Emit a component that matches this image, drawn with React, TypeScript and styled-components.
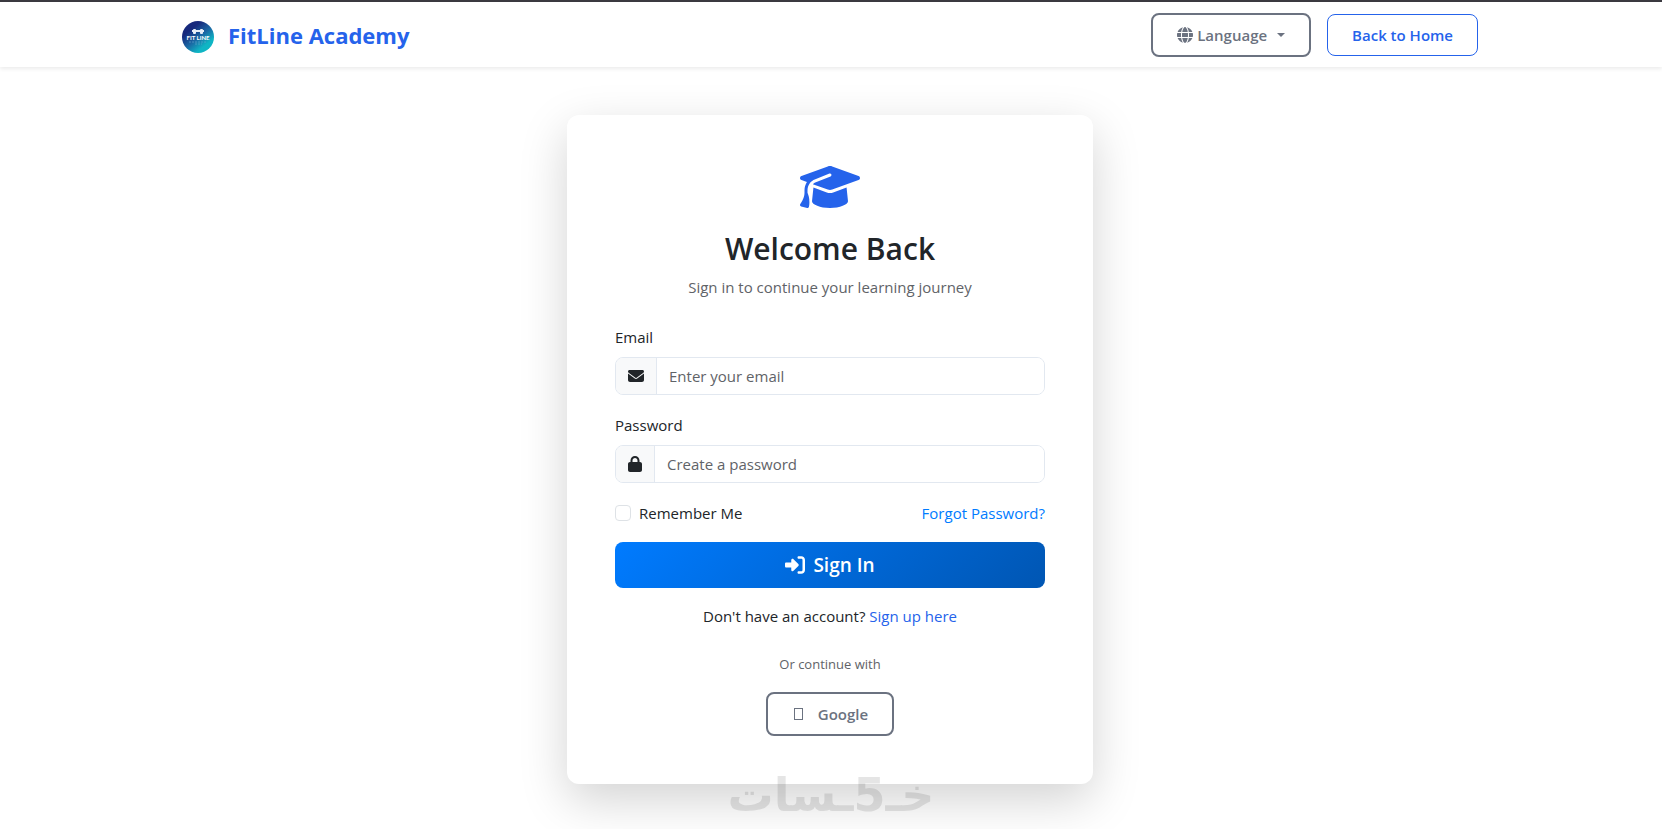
import React from "react";
import styled, { createGlobalStyle } from "styled-components";
import {
  FaEnvelope,
  FaGlobe,
  FaGraduationCap,
  FaLock,
  FaRightToBracket,
} from "react-icons/fa6";

const GlobalStyle = createGlobalStyle`
  *, *::before, *::after { box-sizing: border-box; }
  body {
    margin: 0;
    background: #fff;
    color: #212529;
    font-family: "Segoe UI", "Open Sans", "Noto Sans", sans-serif;
    font-size: 15px;
    line-height: 24px;
  }
  button, input { font: inherit; color: inherit; }
`;

const Page = styled.div`
  min-height: 100vh;
  border-top: 2px solid #3b3a40;
`;

const Navbar = styled.header`
  background: #fff;
  box-shadow: 0 2px 4px rgba(0, 0, 0, 0.08);
`;

const NavInner = styled.div`
  display: flex;
  align-items: center;
  justify-content: space-between;
  max-width: 1322px;
  min-height: 65px;
  margin: 0 auto;
  padding: 0 14px 0 12px;
`;

const Brand = styled.a`
  display: flex;
  align-items: flex-end;
  gap: 14px;
  color: #2563eb;
  font-size: 22px;
  font-weight: 700;
  line-height: 36px;
  text-decoration: none;
`;

const Actions = styled.div`
  display: flex;
  align-items: center;
  gap: 16px;
`;

const Button = styled.button<{ $tone: "muted" | "primary" }>`
  display: inline-flex;
  align-items: center;
  justify-content: center;
  padding: 8px 24px;
  border: ${(p) => (p.$tone === "muted" ? "2px" : "1px")} solid;
  border-radius: 8px;
  background: transparent;
  color: ${(p) => (p.$tone === "muted" ? "#6b7280" : "#2563eb")};
  font-weight: 600;
  text-decoration: none;
  cursor: pointer;
`;

const GlobeIcon = styled(FaGlobe)`
  margin-right: 4px;
  font-size: 16px;
`;

const Caret = styled.span`
  margin-left: 10px;
  border-top: 4px solid;
  border-left: 4px solid transparent;
  border-right: 4px solid transparent;
`;

const Main = styled.main`
  display: flex;
  justify-content: center;
  padding: 48px 14px 44px 12px;
`;

const Card = styled.section`
  width: 100%;
  max-width: 526px;
  padding: 48px;
  border-radius: 12px;
  background: #fff;
  box-shadow: 0 16px 48px rgba(0, 0, 0, 0.175);
`;

const Intro = styled.div`
  display: flex;
  flex-direction: column;
  align-items: center;
  margin-bottom: 26px;
  text-align: center;
`;

const CapIcon = styled(FaGraduationCap)`
  width: 60px;
  height: 48px;
  margin-bottom: 18px;
  color: #2563eb;
`;

const Title = styled.h1`
  margin: 0 0 6px;
  font-size: 30px;
  font-weight: 600;
  line-height: 40px;
`;

const Subtitle = styled.p`
  margin: 0;
  color: #5f6368;
`;

const Field = styled.div`
  margin-bottom: 18px;
`;

const Label = styled.label`
  display: block;
  margin-bottom: 8px;
`;

const InputGroup = styled.div`
  display: flex;
  height: 38px;
  border: 1px solid #e2e8f0;
  border-radius: 8px;
  overflow: hidden;
`;

const Addon = styled.span`
  display: flex;
  align-items: center;
  padding: 0 12px;
  border-right: 1px solid #e2e8f0;
  background: #f8f9fa;
  font-size: 16px;
`;

const LockIcon = styled(FaLock)`
  width: 14px;
  height: 16px;
`;

const Input = styled.input`
  flex: 1;
  min-width: 0;
  padding: 0 12px;
  border: 0;
  outline: 0;
  background: #fff;
  &::placeholder { color: #5f6368; opacity: 1; }
`;

const Options = styled.div`
  display: flex;
  align-items: center;
  justify-content: space-between;
  margin-bottom: 17px;
`;

const Check = styled.label`
  display: flex;
  align-items: center;
  gap: 8px;
`;

const Checkbox = styled.input`
  appearance: none;
  width: 16px;
  height: 16px;
  margin: 0;
  border: 1px solid #dee2e6;
  border-radius: 4px;
  background: #fff;
  &:checked { background: #2563eb; }
`;

const TextLink = styled.a<{ $color: string }>`
  color: ${(p) => p.$color};
  text-decoration: none;
`;

const Submit = styled.button`
  display: flex;
  align-items: center;
  justify-content: center;
  gap: 8px;
  width: 100%;
  height: 46px;
  border: 0;
  border-radius: 8px;
  background: linear-gradient(135deg, #007bff, #0056b3);
  color: #fff;
  font-size: 19px;
  font-weight: 600;
  cursor: pointer;
  svg { font-size: 20px; }
`;

const Footer = styled.div`
  display: flex;
  flex-direction: column;
  align-items: center;
  margin-top: 16px;
`;

const Prompt = styled.p`
  margin: 0 0 24px;
`;

const Divider = styled.p`
  margin: 0 0 16px;
  color: #5f6368;
  font-size: 13px;
`;

const GlyphBox = styled.span`
  width: 9px;
  height: 12px;
  margin: 0 15px 0 2px;
  border: 1px solid;
`;

const Watermark = styled.div`
  position: fixed;
  bottom: 4px;
  left: 50%;
  display: flex;
  align-items: baseline;
  transform: translateX(-50%);
  direction: rtl;
  color: #000;
  opacity: 0.1;
  font-family: "DejaVu Sans", sans-serif;
  font-size: 46px;
  font-weight: 700;
  line-height: 60px;
  white-space: nowrap;
  pointer-events: none;
`;

function Logo() {
  return (
    <svg width="32" height="32" viewBox="0 0 32 32" aria-hidden="true">
      <defs>
        <linearGradient id="disc" x1="0.15" y1="0.1" x2="0.8" y2="0.9">
          <stop offset="0.2" stopColor="#17297c" />
          <stop offset="0.55" stopColor="#1a6aa5" />
          <stop offset="0.85" stopColor="#0fb5c4" />
        </linearGradient>
      </defs>
      <circle cx="16" cy="16" r="16" fill="url(#disc)" />
      <g fill="#e8eef7">
        <rect x="11" y="8" width="3" height="5" rx="1" />
        <rect x="18" y="8" width="3" height="5" rx="1" />
        <rect x="10" y="9" width="12" height="2" />
      </g>
      <text
        x="16"
        y="19"
        fill="#fff"
        fontFamily="Lato, sans-serif"
        fontSize="6"
        fontWeight="700"
        textAnchor="middle"
      >
        FIT LINE
      </text>
      <path d="M7 21h18M13 23h7" stroke="#6ba9d0" strokeWidth="1" strokeDasharray="2 1" opacity="0.6" />
    </svg>
  );
}

export default function App() {
  return (
    <Page>
      <GlobalStyle />
      <Navbar>
        <NavInner>
          <Brand href="#">
            <Logo />
            FitLine Academy
          </Brand>
          <Actions>
            <Button type="button" $tone="muted">
              <GlobeIcon />
              Language
              <Caret />
            </Button>
            <Button as="a" href="#" $tone="primary">
              Back to Home
            </Button>
          </Actions>
        </NavInner>
      </Navbar>

      <Main>
        <Card>
          <Intro>
            <CapIcon />
            <Title>Welcome Back</Title>
            <Subtitle>Sign in to continue your learning journey</Subtitle>
          </Intro>

          <form onSubmit={(e) => e.preventDefault()}>
            <Field>
              <Label htmlFor="email">Email</Label>
              <InputGroup>
                <Addon><FaEnvelope /></Addon>
                <Input id="email" type="email" placeholder="Enter your email" />
              </InputGroup>
            </Field>
            <Field>
              <Label htmlFor="password">Password</Label>
              <InputGroup>
                <Addon><LockIcon /></Addon>
                <Input id="password" type="password" placeholder="Create a password" />
              </InputGroup>
            </Field>
            <Options>
              <Check htmlFor="remember">
                <Checkbox id="remember" type="checkbox" />
                Remember Me
              </Check>
              <TextLink href="#" $color="#007bff">Forgot Password?</TextLink>
            </Options>
            <Submit type="submit">
              <FaRightToBracket />
              Sign In
            </Submit>
          </form>

          <Footer>
            <Prompt>
              Don't have an account? <TextLink href="#" $color="#2563eb">Sign up here</TextLink>
            </Prompt>
            <Divider>Or continue with</Divider>
            <Button type="button" $tone="muted">
              <GlyphBox />
              Google
            </Button>
          </Footer>
        </Card>
      </Main>

      <Watermark>
        <span>خـ</span>
        <span>5</span>
        <span>ـسات</span>
      </Watermark>
    </Page>
  );
}
